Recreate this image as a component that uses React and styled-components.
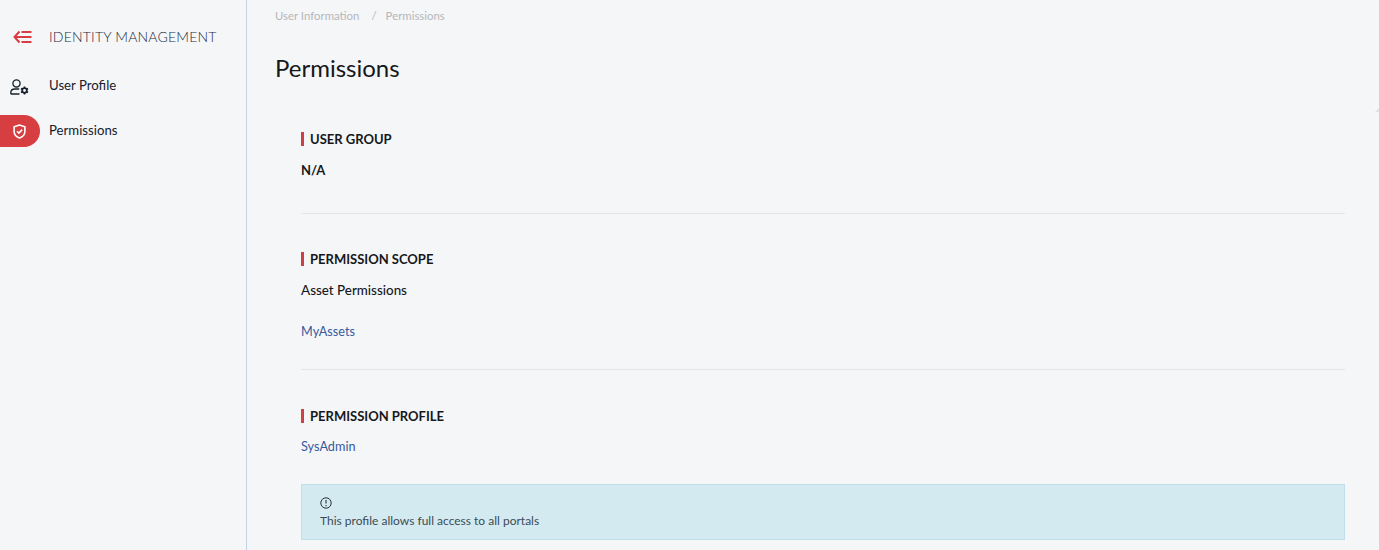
import React from "react";
import styled, { createGlobalStyle } from "styled-components";

const GlobalStyle = createGlobalStyle`
  html, body {
    margin: 0;
    height: 100%;
    overflow: hidden;
    background-color: #f5f6f8;
    font-family: Lato, "Liberation Sans", sans-serif;
  }
  #root {
    height: 100%;
  }
`;

const Page = styled.div`
  position: relative;
  display: flex;
  height: 550px;
  background-color: #f5f6f8;
`;

const Sidebar = styled.nav`
  width: 246px;
  flex-shrink: 0;
  border-right: 1px solid #c5d3e4;
`;

const SideTitle = styled.div`
  display: flex;
  align-items: center;
  height: 28px;
  margin-top: 22px;
  margin-bottom: 20px;
  padding-left: 13px;
  font-size: 14px;
  font-weight: 300;
  letter-spacing: 0.2px;
  color: #1b2a3d;

  svg {
    margin: 2px 17px 0 0;
  }
`;

const SideItem = styled.div`
  display: flex;
  align-items: center;
  height: 32px;
  margin-bottom: 13px;
  font-size: 13.2px;
  color: #16202c;
`;

const SideLabel = styled.span`
  padding-bottom: 2px;
`;

const IconSlot = styled.div`
  display: flex;
  align-items: center;
  justify-content: center;
  width: 40px;
  height: 32px;
  margin-right: 9px;
  padding-left: ${(p) => (p.$active ? 0 : 1)}px;
  padding-right: ${(p) => (p.$active ? 2 : 3)}px;
  padding-top: ${(p) => (p.$active ? 0 : 2)}px;
  box-sizing: border-box;
  border-radius: 0 16px 16px 0;
  background-color: ${(p) => (p.$active ? "#d63e42" : "transparent")};
  color: ${(p) => (p.$active ? "#fff" : "#16202c")};
`;

const Main = styled.main`
  flex: 1;
  min-width: 0;
  padding: 0 34px 0 28px;
`;

const Crumbs = styled.div`
  display: flex;
  height: 31px;
  margin-bottom: 1px;
  align-items: center;
  font-size: 11.4px;
  color: #b5b7ba;
`;

const CrumbSep = styled.span`
  margin: 0 9px 0 12px;
`;

const Heading = styled.h1`
  margin: 20px 0 0;
  font-size: 24px;
  line-height: 34px;
  font-weight: 400;
  color: #16181b;
`;

const Body = styled.div`
  padding: 47px 0 0 26px;
`;

const Section = styled.section`
  border-bottom: ${(p) => (p.$last ? "none" : "1px solid #e2e5e9")};
  padding-bottom: ${(p) => p.$pad}px;
  margin-bottom: ${(p) => p.$after || 0}px;
`;

const SectionTitle = styled.h2`
  margin: 0 0 ${(p) => p.$gap || 14}px;
  height: 14px;
  display: flex;
  align-items: center;
  border-left: 3px solid #cc4143;
  padding-left: 6px;
  font-size: 13px;
  font-weight: 700;
  color: #16181b;
`;

const Value = styled.div`
  font-size: ${(p) => (p.$bold ? 13 : 13.4)}px;
  line-height: 20px;
  font-weight: ${(p) => (p.$bold ? 700 : 500)};
  color: #16181b;
`;

const LinkText = styled.a`
  display: block;
  margin-top: ${(p) => p.$top || 0}px;
  font-size: 12.7px;
  line-height: 20px;
  color: #3a5a9c;
`;

const Notice = styled.div`
  margin-top: 28px;
  height: 56px;
  box-sizing: border-box;
  padding: 12px 18px;
  background-color: #d3eaf1;
  border: 1px solid #bfe0e8;
  font-size: 12px;
  color: #3d4a55;
`;

const NoticeIcon = styled.div`
  height: 13px;
  margin-bottom: 3px;
  color: #26323c;
`;

const EdgeMark = styled.div`
  position: absolute;
  top: 108px;
  right: 0;
  width: 0;
  height: 0;
  border-left: 4px solid transparent;
  border-bottom: 4px solid #dfe0ec;
`;

const BackIcon = () => (
  <svg width="19" height="14" viewBox="0 0 19 14" fill="none" stroke="#d63e42" strokeWidth="2">
    <path d="M6.5 1.5 1.5 7 6.5 12.5" />
    <path d="M2 7h16.5M8.5 2h10M8.5 12h10" />
  </svg>
);

const UserGearIcon = () => (
  <svg width="19" height="16" viewBox="0 0 19 16" fill="none" stroke="currentColor" strokeWidth="1.3">
    <circle cx="6.5" cy="4.4" r="3.6" />
    <path d="M.8 15v-1.2C.8 11.4 2.6 10 5 10h4.2M.8 15h8.7" />
    <circle cx="14.5" cy="11.5" r="2.3" strokeWidth="1.7" />
    <path d="M14.5 7.4v1.6M14.5 14v1.6M11 9.5l1.4.8M16.6 12.7l1.4.8M11 13.5l1.4-.8M16.6 10.3l1.4-.8" strokeWidth="1.5" />
  </svg>
);

const ShieldIcon = () => (
  <svg width="13" height="15" viewBox="0 0 14 16" fill="none" stroke="currentColor" strokeWidth="1.7">
    <path d="M7 1 1.2 3v5c0 3.4 2.6 5.8 5.8 7 3.2-1.2 5.8-3.6 5.8-7V3L7 1Z" />
    <path d="M4.3 7.8 6.3 9.8 9.9 6" />
  </svg>
);

const InfoIcon = () => (
  <svg width="12" height="12" viewBox="0 0 12 12" fill="none" stroke="currentColor" strokeWidth="1">
    <circle cx="6" cy="6" r="5.2" />
    <path d="M6 3v3.6M6 8v1.2" strokeWidth="1.1" />
  </svg>
);

export default function App() {
  return (
    <Page>
      <GlobalStyle />
      <Sidebar>
        <SideTitle>
          <BackIcon />
          IDENTITY MANAGEMENT
        </SideTitle>
        <SideItem>
          <IconSlot>
            <UserGearIcon />
          </IconSlot>
          <SideLabel>User Profile</SideLabel>
        </SideItem>
        <SideItem>
          <IconSlot $active>
            <ShieldIcon />
          </IconSlot>
          <SideLabel>Permissions</SideLabel>
        </SideItem>
      </Sidebar>
      <Main>
        <Crumbs>
          User Information
          <CrumbSep>/</CrumbSep>
          Permissions
        </Crumbs>
        <Heading>Permissions</Heading>
        <Body>
          <Section $pad={33} $after={38}>
            <SectionTitle>USER GROUP</SectionTitle>
            <Value $bold>N/A</Value>
          </Section>
          <Section $pad={28} $after={39}>
            <SectionTitle>PERMISSION SCOPE</SectionTitle>
            <Value>Asset Permissions</Value>
            <LinkText $top={21}>MyAssets</LinkText>
          </Section>
          <Section $last>
            <SectionTitle $gap={13}>PERMISSION PROFILE</SectionTitle>
            <LinkText>SysAdmin</LinkText>
            <Notice>
              <NoticeIcon>
                <InfoIcon />
              </NoticeIcon>
              This profile allows full access to all portals
            </Notice>
          </Section>
        </Body>
      </Main>
      <EdgeMark />
    </Page>
  );
}
